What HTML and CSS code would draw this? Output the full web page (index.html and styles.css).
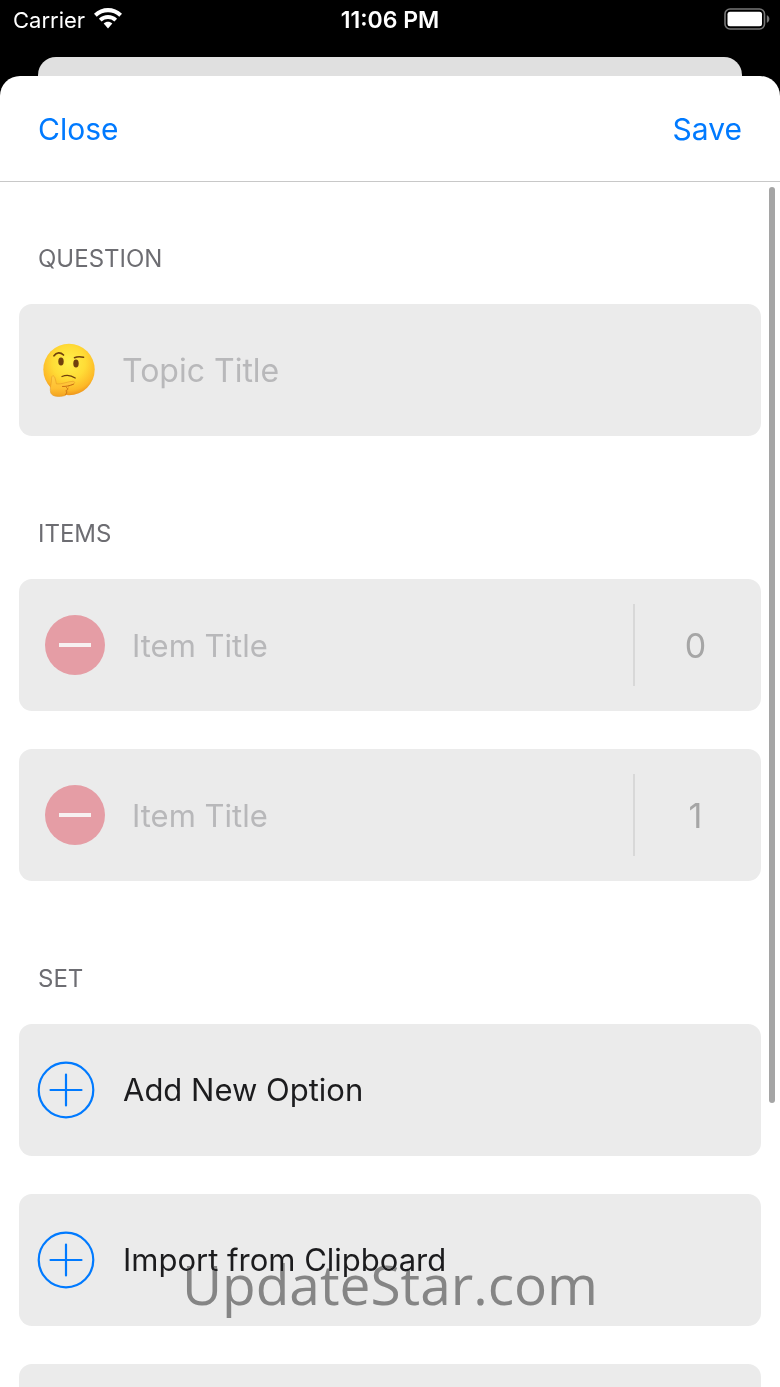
FILE: index.html
```html
<!DOCTYPE html>
<html lang="en">
<head>
  <meta charset="UTF-8">
  <meta name="viewport" content="width=device-width, initial-scale=1">
  <title>New Topic</title>
  <link rel="stylesheet" href="styles.css">
</head>
<body>

<header class="status-bar">
  <div class="carrier">
    <span>Carrier</span>
    <svg width="28" height="21" viewBox="0 0 28 21" fill="#fff">
      <path d="M0 5.8C7.8-1.9 20.2-1.9 28 5.8L25.3 8.7C19 2.8 9 2.8 2.7 8.7Z"/>
      <path d="M4.9 10.7C10 5.7 18 5.7 23.1 10.7L20.4 13.5C16.8 10.2 11.2 10.2 7.6 13.5Z"/>
      <path d="M9.7 15.5C12.1 13.2 15.9 13.2 18.3 15.5L14 20.4Z"/>
    </svg>
  </div>
  <div class="time">11:06 PM</div>
  <div class="battery">
    <svg width="46" height="22" viewBox="0 0 46 22">
      <rect x="1" y="1" width="39.5" height="20" rx="5" fill="none" stroke="#777" stroke-width="1.6"/>
      <rect x="3.5" y="3.8" width="34.5" height="14.4" rx="2.5" fill="#fff"/>
      <path d="M42.8 7.2C46.2 8.4 46.2 13.6 42.8 14.8Z" fill="#777"/>
    </svg>
  </div>
</header>

<div class="back-sheet"></div>

<main class="sheet">
  <nav class="nav-bar">
    <button class="nav-button">Close</button>
    <button class="nav-button">Save</button>
  </nav>

  <div class="content">
    <section>
      <h2><label for="topicTitle">QUESTION</label></h2>
      <div class="card topic">
        <svg class="emoji" viewBox="0 0 54 54">
          <defs>
            <radialGradient id="face" cx="50%" cy="36%" r="64%">
              <stop offset="0" stop-color="#fff04a"/>
              <stop offset="0.5" stop-color="#ffdc36"/>
              <stop offset="0.85" stop-color="#fdb827"/>
              <stop offset="1" stop-color="#ee951c"/>
            </radialGradient>
            <linearGradient id="hand" x1="0" y1="0" x2="0" y2="1">
              <stop offset="0" stop-color="#ffce45"/>
              <stop offset="0.6" stop-color="#ffc032"/>
              <stop offset="1" stop-color="#f2a222"/>
            </linearGradient>
          </defs>
          <circle cx="27" cy="26.5" r="25.7" fill="url(#face)"/>
          <ellipse cx="19" cy="18.5" rx="2.7" ry="3.9" fill="#70400d"/>
          <ellipse cx="34" cy="20.5" rx="2.7" ry="3.9" fill="#70400d"/>
          <path d="M12 12.8C14.5 9 18.5 9 21.5 12" fill="none" stroke="#70400d" stroke-width="1.7" stroke-linecap="round"/>
          <path d="M32.5 14.7C35 13.5 38.5 13.5 41.5 14.2" fill="none" stroke="#70400d" stroke-width="1.6" stroke-linecap="round"/>
          <path d="M20 33.5C24 31.8 29.5 32.5 33.2 35" fill="none" stroke="#70400d" stroke-width="1.3" stroke-linecap="round"/>
          <path d="M10.8 32.7C13.2 33 13.5 37.5 14.5 41C20 41.5 26 38.3 31 38.3C33.3 38.5 33.2 40.4 31 41.5L26 43.5C26.8 44.7 26.5 46.5 25.3 47.5C26 50 24.5 52 22.5 52.7C17 54.2 10.5 53.8 8.8 50C7.8 46.5 8.5 43 9.2 40C9.8 37.5 8.8 33.5 10.8 32.7Z" fill="url(#hand)" stroke="#e59a25" stroke-width="0.6"/>
          <path d="M20.5 43.5C24 43.6 27.500 42.800 31.5 41.2M24.500 44.500C26.200 45 25.800 47 24.500 47.500M24 48C25 48.800 24.800 50.500 23.500 51.500" fill="none" stroke="#c96f13" stroke-width="1" stroke-linecap="round"/>
        </svg>
        <input type="text" id="topicTitle" class="topic-input" placeholder="Topic Title">
      </div>
    </section>

    <section>
      <h2>ITEMS</h2>
      <div class="card item">
        <button class="remove" aria-label="Remove item" disabled>
          <svg viewBox="0 0 60 60"><circle cx="30" cy="30" r="30" fill="#e59da5"/><path d="M14 30H46" stroke="#f7f1f1" stroke-width="4"/></svg>
        </button>
        <input type="text" class="item-input" placeholder="Item Title" aria-label="Item title">
        <input type="text" class="weight" value="0" aria-label="Item value">
      </div>
      <div class="card item">
        <button class="remove" aria-label="Remove item" disabled>
          <svg viewBox="0 0 60 60"><circle cx="30" cy="30" r="30" fill="#e59da5"/><path d="M14 30H46" stroke="#f7f1f1" stroke-width="4"/></svg>
        </button>
        <input type="text" class="item-input" placeholder="Item Title" aria-label="Item title">
        <input type="text" class="weight" value="1" aria-label="Item value">
      </div>
    </section>

    <section>
      <h2>SET</h2>
      <button class="card action">
        <svg viewBox="0 0 58 58" fill="none" stroke="#007aff" stroke-width="2.2" stroke-linecap="round"><circle cx="29" cy="29" r="27.3"/><path d="M13.5 29H44.5M29 13.5V44.5"/></svg>
        <span>Add New Option</span>
      </button>
      <button class="card action">
        <svg viewBox="0 0 58 58" fill="none" stroke="#007aff" stroke-width="2.2" stroke-linecap="round"><circle cx="29" cy="29" r="27.3"/><path d="M13.5 29H44.5M29 13.5V44.5"/></svg>
        <span>Import from Clipboard</span>
      </button>
      <div class="card"></div>
    </section>

    <div class="scroll-thumb"></div>
  </div>
</main>

<div class="watermark">UpdateStar.com</div>

</body>
</html>
```

FILE: styles.css
```css
* {
  box-sizing: border-box;
}
body {
  font-family: Inter, "Liberation Sans", sans-serif;
  background-color: #000;
  margin: 0;
  height: 100vh;
  display: flex;
  flex-direction: column;
  overflow: hidden;
}
button, input {
  font-family: inherit;
  background: none;
  border: none;
  padding: 0;
  margin: 0;
}
svg {
  display: block;
  flex-shrink: 0;
}

/* status bar */
.status-bar {
  display: grid;
  grid-template-columns: 1fr auto 1fr;
  align-items: start;
  height: 57px;
  padding: 8px 10px;
  color: #fff;
  font-size: 22px;
  line-height: 24px;
  flex-shrink: 0;
}
.carrier {
  display: flex;
  gap: 9px;
  padding-left: 3px;
}
.time {
  font-size: 23px;
  font-weight: 600;
}
.battery {
  justify-self: end;
}

/* sheets */
.back-sheet {
  height: 19px;
  margin: 0 38px;
  background: #e0e0e0;
  border-radius: 18px 18px 0 0;
  flex-shrink: 0;
}
.sheet {
  flex: 1;
  min-height: 0;
  display: flex;
  flex-direction: column;
  background: #fff;
  border-radius: 20px 20px 0 0;
}
.nav-bar {
  display: flex;
  justify-content: space-between;
  align-items: center;
  height: 106px;
  padding: 0 38px;
  border-bottom: 1px solid #c8c8c8;
  flex-shrink: 0;
}
.nav-button {
  color: #007aff;
  font-size: 30px;
  line-height: 40px;
  cursor: pointer;
}
.content {
  position: relative;
  flex: 1;
  min-height: 0;
  padding: 0 19px;
  overflow: hidden;
}
section {
  margin-bottom: 21px;
}
h2 {
  margin: 0;
  padding: 62px 19px 30px;
  font-size: 24px;
  line-height: 30px;
  font-weight: 400;
  color: #6d6d72;
}

/* cards */
.card {
  display: flex;
  align-items: center;
  width: 100%;
  height: 132px;
  background: #ebebeb;
  border-radius: 13px;
}
.card + .card {
  margin-top: 38px;
}
.topic {
  padding: 0 24px 0 23px;
  gap: 26px;
}
.emoji {
  width: 54px;
  height: 54px;
}
.item {
  padding-left: 26px;
}
.remove {
  width: 60px;
  height: 60px;
  margin-right: 27px;
  flex-shrink: 0;
}
.topic-input, .item-input {
  flex: 1;
  min-width: 0;
  height: 82px;
  color: #1c1c1e;
  font-size: 31px;
}
.topic-input {
  font-size: 32px;
}
::placeholder {
  color: #b8b8ba;
  opacity: 1;
}
.weight {
  width: 128px;
  height: 82px;
  padding-right: 5px;
  border-left: 2px solid #d8d8d8;
  color: #a6a6a6;
  font-size: 34px;
  text-align: center;
}
.action {
  padding: 0 18px;
  gap: 28px;
  color: #1c1c1e;
  font-size: 31px;
  line-height: 40px;
  cursor: pointer;
}
.action svg {
  width: 58px;
  height: 58px;
}

.scroll-thumb {
  position: absolute;
  top: 5px;
  right: 5px;
  width: 6px;
  height: 76%;
  background: #a5a5a5;
  border-radius: 3px;
}
.watermark {
  position: absolute;
  left: 0;
  right: 0;
  bottom: 63px;
  font-family: "Open Sans", "Noto Sans", sans-serif;
  font-size: 55px;
  line-height: 80px;
  text-align: center;
  color: #858585;
  mix-blend-mode: darken;
  pointer-events: none;
}
```
